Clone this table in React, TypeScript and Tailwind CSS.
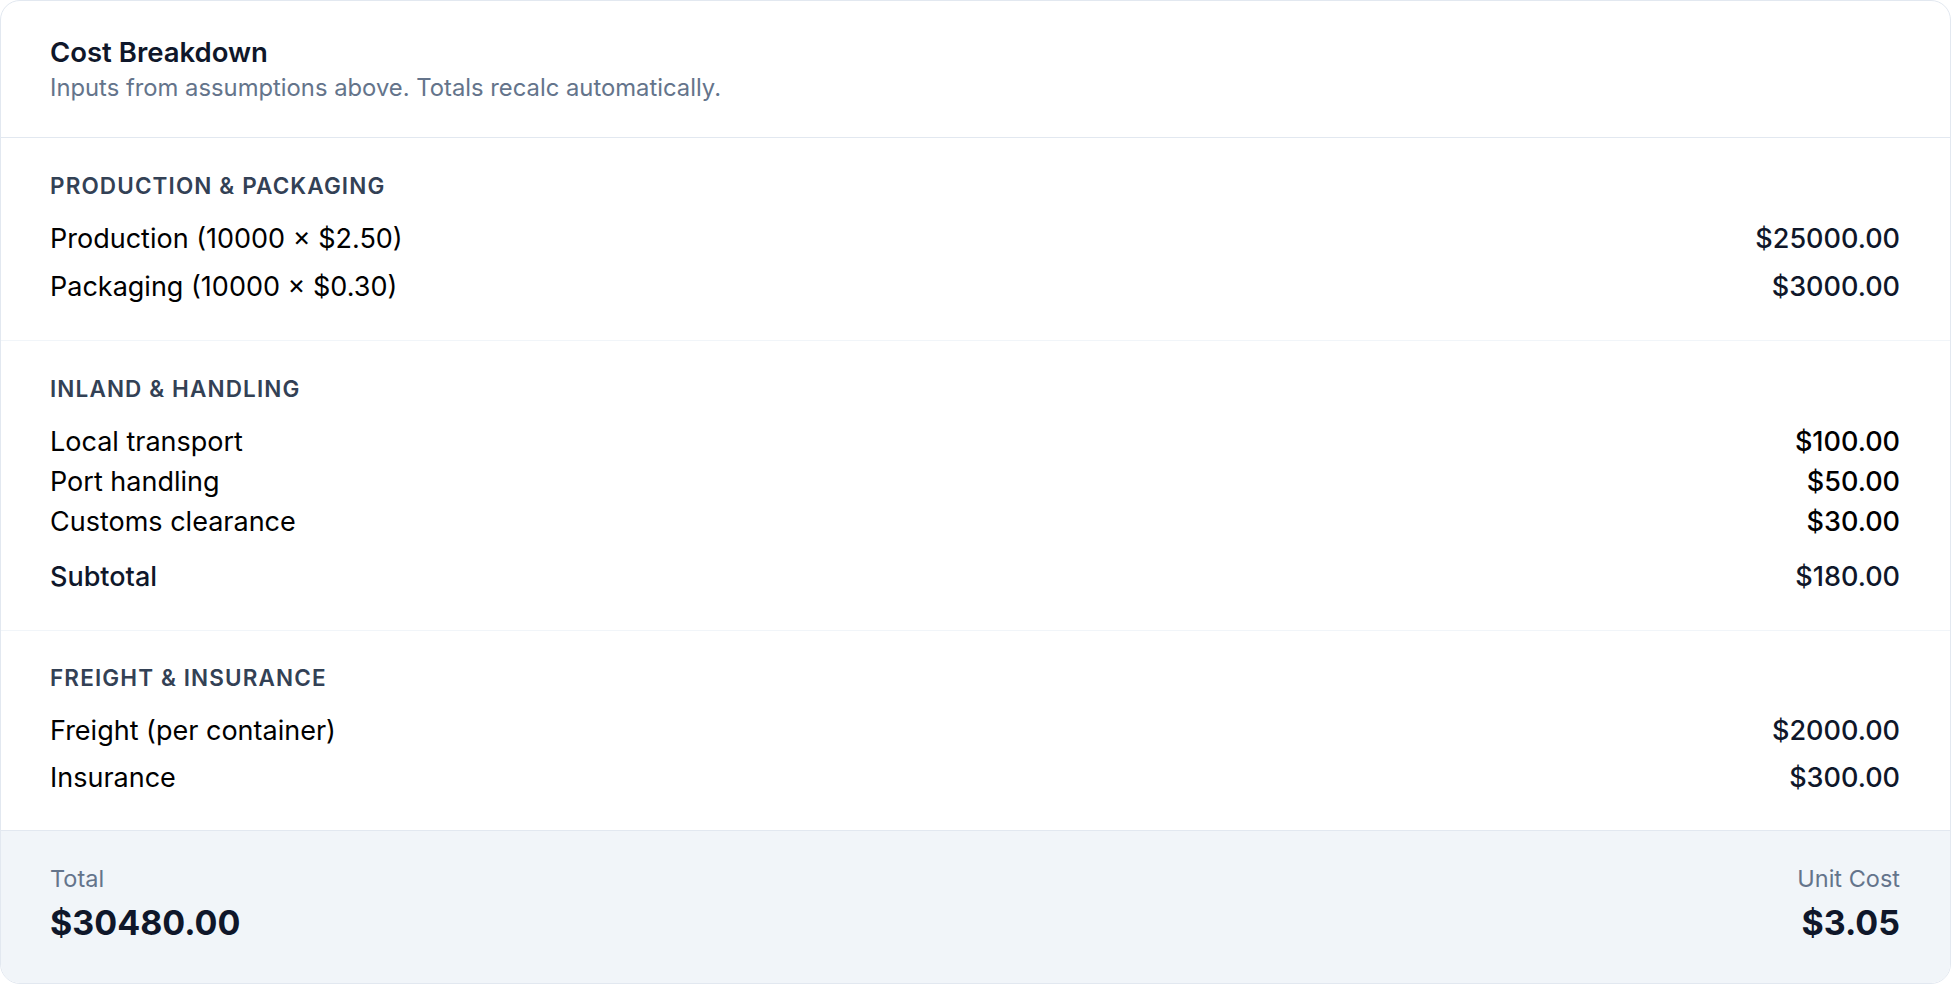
const font = { fontFamily: "Inter, 'Noto Sans', sans-serif" }

type Line = { label: string; value: string; strong?: boolean }

const sections: { title: string; gap: string; rows: Line[]; subtotal?: Line }[] = [
  {
    title: "Production & Packaging",
    gap: "gap-[18px]",
    rows: [
      { label: "Production (10000 × $2.50)", value: "$25000.00" },
      { label: "Packaging (10000 × $0.30)", value: "$3000.00" },
    ],
  },
  {
    title: "Inland & Handling",
    gap: "gap-[10px]",
    rows: [
      { label: "Local transport", value: "$100.00", strong: true },
      { label: "Port handling", value: "$50.00", strong: true },
      { label: "Customs clearance", value: "$30.00", strong: true },
    ],
    subtotal: { label: "Subtotal", value: "$180.00" },
  },
  {
    title: "Freight & Insurance",
    gap: "gap-[17px]",
    rows: [
      { label: "Freight (per container)", value: "$2000.00" },
      { label: "Insurance", value: "$300.00" },
    ],
  },
]

function Row({ label, value, strong }: Line) {
  return (
    <div className="flex items-center justify-between text-[27px] leading-[30px]">
      <span className="text-black">{label}</span>
      <span className={strong ? "font-medium text-black" : "font-medium text-[#0f172a]"}>{value}</span>
    </div>
  )
}

export default function App() {
  return (
    <div className="bg-white" style={font}>
      <div className="w-full overflow-hidden rounded-[20px] border border-[#e2e8f0] bg-white">
        {/* Header */}
        <div className="border-b border-[#e2e8f0] pl-[49px] pr-[50px] pt-[34px] pb-[34px]">
          <h2 className="text-[27.5px] leading-[35px] font-semibold text-[#0f172a]">Cost Breakdown</h2>
          <p className="mt-[3px] text-[23.8px] leading-[30px] text-[#64748b]">
            Inputs from assumptions above. Totals recalc automatically.
          </p>
        </div>

        {sections.map((s, i) => (
          <div
            key={s.title}
            className={
              i < sections.length - 1
                ? "border-b border-[#f1f5f9] pl-[49px] pr-[50px] pt-[35px] pb-[38px]"
                : "pl-[49px] pr-[50px] pt-[34px] pb-[37px]"
            }
          >
            <div className="text-[22.5px] leading-[25px] font-semibold tracking-[0.05em] text-[#334155] uppercase">
              {s.title}
            </div>
            <div className={`mt-[26px] flex flex-col ${s.gap}`}>
              {s.rows.map((r) => (
                <Row key={r.label} {...r} />
              ))}
            </div>
            {s.subtotal && (
              <div className="mt-[25px] flex items-center justify-between text-[27px] leading-[30px] font-medium text-[#0f172a]">
                <span>{s.subtotal.label}</span>
                <span>{s.subtotal.value}</span>
              </div>
            )}
          </div>
        ))}

        {/* Totals */}
        <div className="flex items-start justify-between border-t border-[#e2e8f0] bg-[#f1f5f9] pl-[49px] pr-[50px] pt-[34px] pb-[40px]">
          <div>
            <div className="text-[23.5px] leading-[28px] text-[#64748b]">Total</div>
            <div className="mt-[10px] text-[34px] leading-[40px] font-bold text-[#0f172a]">$30480.00</div>
          </div>
          <div className="text-right">
            <div className="text-[23.5px] leading-[28px] text-[#64748b]">Unit Cost</div>
            <div className="mt-[10px] text-[34px] leading-[40px] font-bold text-[#0f172a]">$3.05</div>
          </div>
        </div>
      </div>
    </div>
  )
}
